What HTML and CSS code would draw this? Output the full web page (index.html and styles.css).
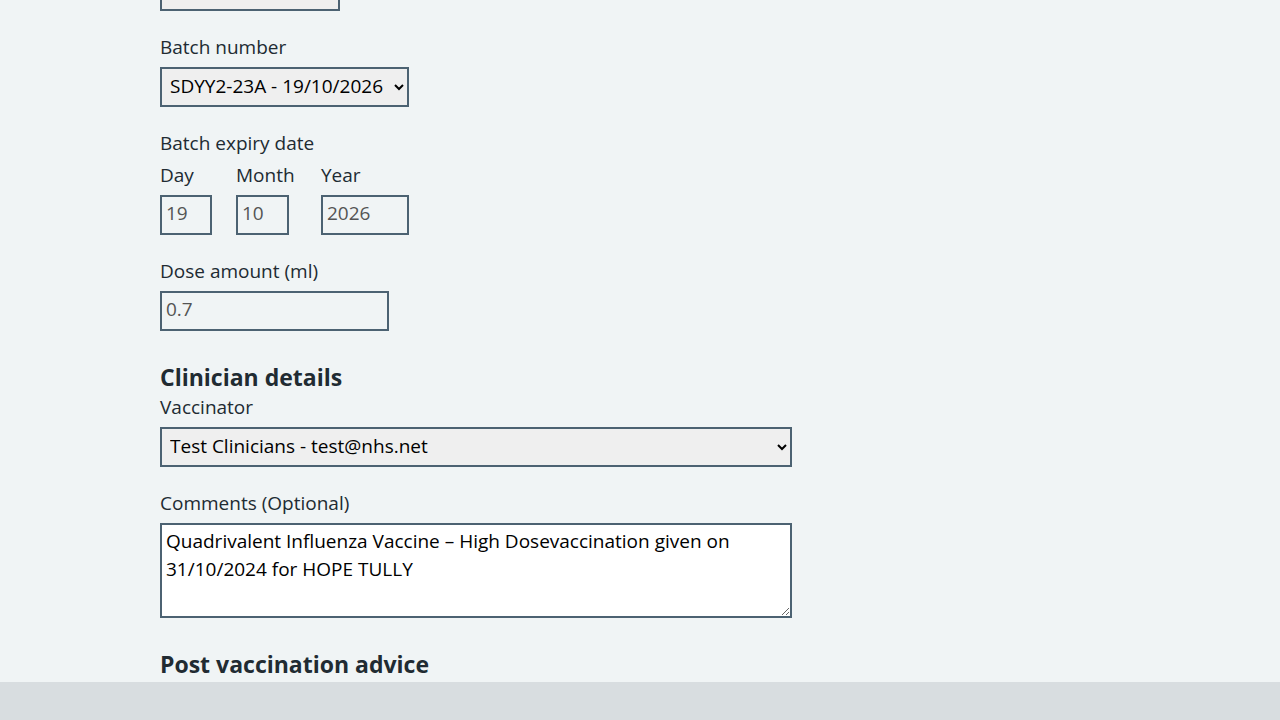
FILE: index.html
```html
<!DOCTYPE html>
<html lang="en">
<head>
<meta charset="utf-8">
<title>Record vaccination</title>
<link rel="stylesheet" href="styles.css">
</head>
<body>
<main class="page">
  <div class="form-group">
    <select class="select select-top"><option>&nbsp;</option></select>
  </div>

  <div class="form-group">
    <label class="label" for="batch">Batch number</label>
    <select class="select select-batch" id="batch"><option>SDYY2-23A - 19/10/2026</option></select>
  </div>

  <fieldset class="form-group fieldset">
    <legend class="label legend">Batch expiry date</legend>
    <div class="date">
      <div class="date-item">
        <label class="label" for="day">Day</label>
        <input class="input input-day" id="day" value="19" disabled>
      </div>
      <div class="date-item date-item-month">
        <label class="label" for="month">Month</label>
        <input class="input input-month" id="month" value="10" disabled>
      </div>
      <div class="date-item">
        <label class="label" for="year">Year</label>
        <input class="input input-year" id="year" value="2026" disabled>
      </div>
    </div>
  </fieldset>

  <div class="form-group">
    <label class="label" for="dose">Dose amount (ml)</label>
    <input class="input input-dose" id="dose" value="0.7" disabled>
  </div>

  <h2 class="heading">Clinician details</h2>
  <div class="form-group">
    <label class="label" for="vacc">Vaccinator</label>
    <select class="select select-wide" id="vacc"><option>Test Clinicians - test@nhs.net</option></select>
  </div>

  <div class="form-group">
    <label class="label" for="comments">Comments (Optional)</label>
    <textarea class="textarea" id="comments">Quadrivalent Influenza Vaccine – High Dosevaccination given on 31/10/2024 for HOPE TULLY</textarea>
  </div>

  <h2 class="heading">Post vaccination advice</h2>
</main>
<footer class="footer"></footer>
</body>
</html>
```
FILE: styles.css
```css
html, body {
  margin: 0;
  padding: 0;
  background: #f0f4f5;
}
body {
  font-family: "Open Sans", "Noto Sans", sans-serif;
  color: #212b32;
  font-size: 19px;
  line-height: 24px;
  overflow: hidden;
  height: 720px;
}
.page {
  padding-left: 160px;
  margin-top: -29px;
}
.form-group {
  margin: 0 0 24px 0;
}
.fieldset {
  border: 0;
  padding: 0;
  min-width: 0;
}
.label {
  display: block;
  font-size: 19px;
  line-height: 24px;
  margin-bottom: 8px;
  color: #212b32;
}
.legend {
  padding: 0;
}
.select, .input, .textarea {
  font-family: inherit;
  font-size: 19px;
  box-sizing: border-box;
  border: 2px solid #4c6272;
  border-radius: 0;
  margin: 0;
}
.select {
  height: 40px;
  padding: 0 4px 3px 4px;
  background: #efefef;
  color: #000;
  display: block;
}
.select-top { width: 180px; }
.select-batch { width: 249px; }
.select-wide { width: 632px; }
.input {
  display: block;
  height: 40px;
  padding: 2px 4px 6px 4px;
  line-height: 28px;
  background: #f0f4f5;
  color: #545454;
}
.date {
  display: flex;
}
.date-item {
  margin-right: 24px;
}
.date-item-month {
  min-width: 61px;
}
.input-day { width: 52px; }
.input-month { width: 53px; }
.input-year { width: 88px; }
.input-dose { width: 229px; }
.heading {
  font-size: 23px;
  line-height: 32px;
  font-weight: 700;
  margin: 30px 0 2px 0;
}
.textarea {
  display: block;
  width: 632px;
  height: 95px;
  padding: 2px 4px 4px 4px;
  line-height: 28px;
  background: #fff;
  color: #000;
  resize: vertical;
}
.footer {
  position: fixed;
  left: 0;
  right: 0;
  bottom: 0;
  height: 38px;
  background: #d8dde0;
  z-index: 10;
}
```
